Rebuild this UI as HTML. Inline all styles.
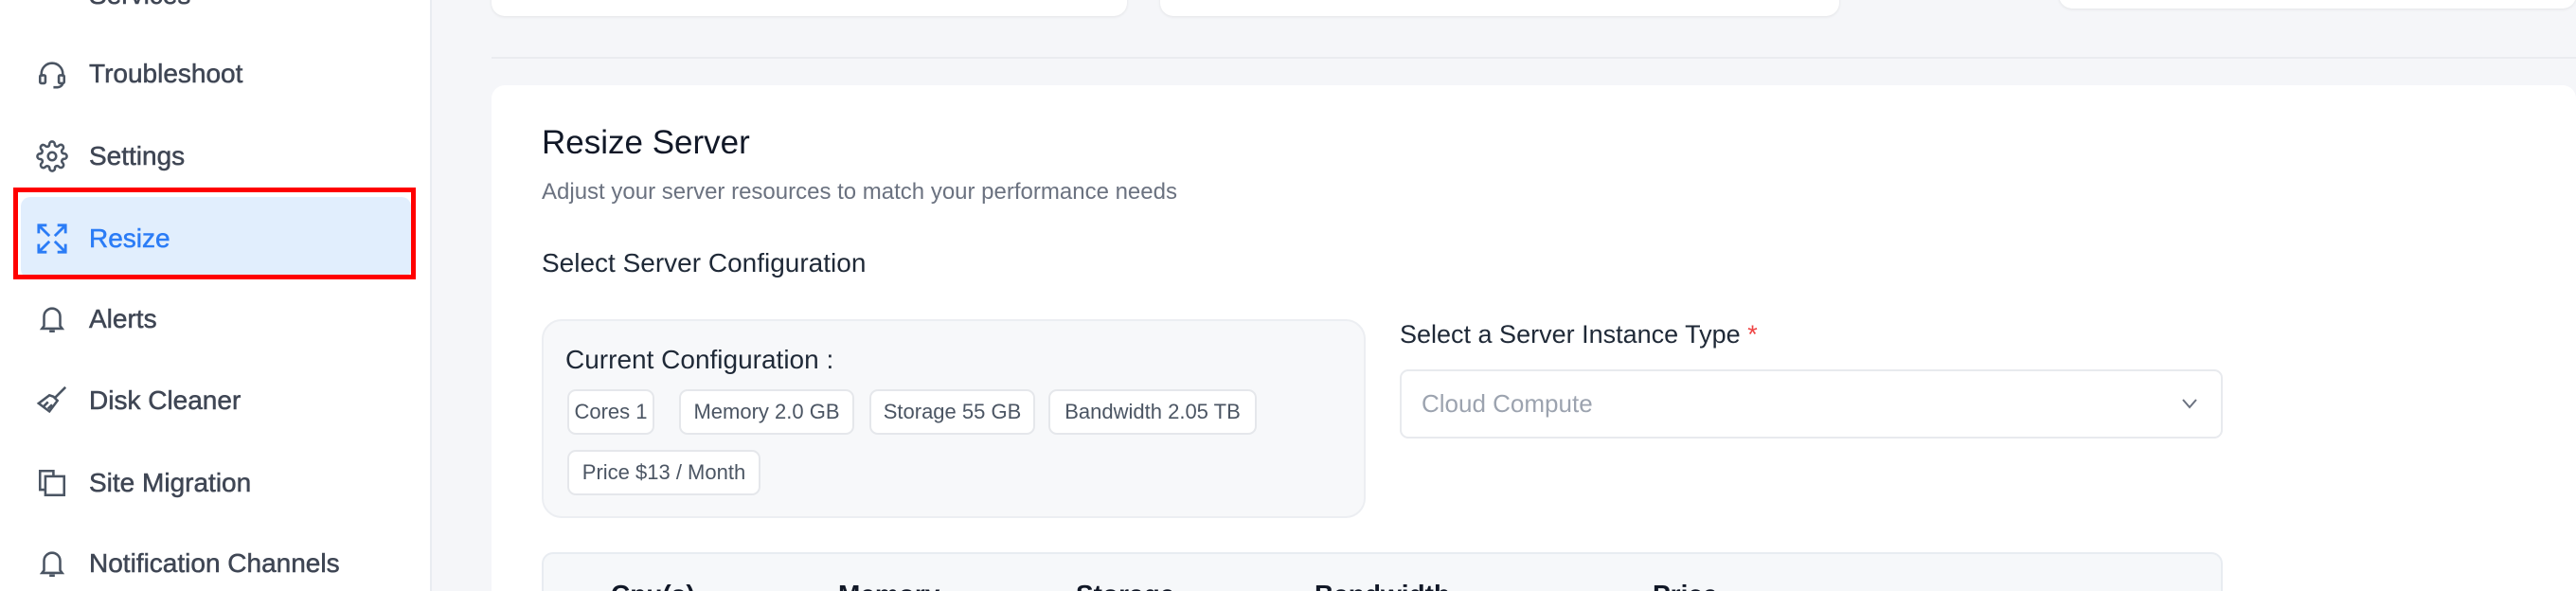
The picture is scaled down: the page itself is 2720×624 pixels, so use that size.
<!DOCTYPE html>
<html style="width:2720px;height:624px;overflow:hidden"><head><style>
*{box-sizing:border-box;margin:0;padding:0}
body{width:2720px;height:624px;overflow:hidden;background:#f5f6f9;font-family:"Liberation Sans",sans-serif;position:relative}
.sb{position:absolute;left:0;top:0;width:456px;height:624px;background:#fff;border-right:2px solid #e9ecf1}
.it{position:absolute;left:94px;font-size:28px;color:#3f4654;line-height:32px;-webkit-text-stroke:0.5px #3f4654}
.ic{position:absolute;left:38px;width:34px;height:34px}
.ab{position:absolute}
.card{position:absolute;background:#fff;border-radius:14px;box-shadow:0 1px 3px rgba(0,0,0,.08)}
.chip{position:absolute;height:48px;border:2px solid #e5e7eb;border-radius:9px;background:#fff;font-size:22px;color:#4b5563;line-height:44px;text-align:center}
.th{position:absolute;top:612px;font-size:28px;font-weight:700;color:#111827}
</style></head><body>
<div class="sb">
 <div class="it" style="top:-21px">Services</div>
 <svg class="ic" style="top:61px" viewBox="0 0 24 24" fill="none" stroke="#4b5563" stroke-width="1.8"><path d="M4 14v-2a8 8 0 0 1 16 0v2"/><rect x="3" y="13" width="4" height="6" rx="1"/><rect x="17" y="13" width="4" height="6" rx="1"/><path d="M20 19a4 4 0 0 1-4 3h-3"/></svg>
 <div class="it" style="top:62px">Troubleshoot</div>
 <svg class="ic" style="top:148px" viewBox="0 0 24 24" fill="none" stroke="#4b5563" stroke-width="1.8"><circle cx="12" cy="12" r="3"/><path d="M19.4 15a1.7 1.7 0 0 0 .3 1.8l.1.1a2 2 0 1 1-2.8 2.8l-.1-.1a1.7 1.7 0 0 0-1.8-.3 1.7 1.7 0 0 0-1 1.5V21a2 2 0 1 1-4 0v-.1a1.7 1.7 0 0 0-1.1-1.5 1.7 1.7 0 0 0-1.8.3l-.1.1a2 2 0 1 1-2.8-2.8l.1-.1a1.7 1.7 0 0 0 .3-1.8 1.7 1.7 0 0 0-1.5-1H3a2 2 0 1 1 0-4h.1a1.7 1.7 0 0 0 1.5-1.1 1.7 1.7 0 0 0-.3-1.8l-.1-.1a2 2 0 1 1 2.8-2.8l.1.1a1.7 1.7 0 0 0 1.8.3H9a1.7 1.7 0 0 0 1-1.5V3a2 2 0 1 1 4 0v.1a1.7 1.7 0 0 0 1 1.5 1.7 1.7 0 0 0 1.8-.3l.1-.1a2 2 0 1 1 2.8 2.8l-.1.1a1.7 1.7 0 0 0-.3 1.8V9a1.7 1.7 0 0 0 1.5 1H21a2 2 0 1 1 0 4h-.1a1.7 1.7 0 0 0-1.5 1z"/></svg>
 <div class="it" style="top:149px">Settings</div>
 <div class="ab" style="left:22px;top:208px;width:412px;height:86px;background:#e1eefd;border-radius:10px"></div>
 <div class="ab" style="left:14px;top:198px;width:425px;height:97px;border:5px solid #ff0000"></div>
 <svg class="ic" style="top:235px" viewBox="0 0 24 24" fill="none" stroke="#2b7cf6" stroke-width="2"><path d="M2 8V2h6M2 2l8 8M22 16v6h-6M22 22l-8-8M16 2h6v6M22 2l-8 8M8 22H2v-6M2 22l8-8"/></svg>
 <div class="it" style="top:236px;color:#2b7cf6;-webkit-text-stroke:0.5px #2b7cf6">Resize</div>
 <svg class="ic" style="top:320px" viewBox="0 0 24 24" fill="none" stroke="#4b5563" stroke-width="1.8"><path d="M6 17V10a6 6 0 0 1 12 0v7l1.5 2h-15z"/><path d="M10 21h4"/></svg>
 <div class="it" style="top:321px">Alerts</div>
 <svg class="ic" style="top:406px" viewBox="0 0 24 24" fill="none" stroke="#4b5563" stroke-width="1.8"><path d="M22 2l-8 8M13 9l3 3-6 8-8-6 8-6z M6 16l3-3M9 18l3-3"/></svg>
 <div class="it" style="top:407px">Disk Cleaner</div>
 <svg class="ic" style="top:493px" viewBox="0 0 24 24" fill="none" stroke="#4b5563" stroke-width="1.8"><path d="M7 17H3V3h10v4"/><rect x="7" y="7" width="14" height="14"/></svg>
 <div class="it" style="top:494px">Site Migration</div>
 <svg class="ic" style="top:578px" viewBox="0 0 24 24" fill="none" stroke="#4b5563" stroke-width="1.8"><path d="M6 17V10a6 6 0 0 1 12 0v7l1.5 2h-15z"/><path d="M10 21h4"/></svg>
 <div class="it" style="top:579px">Notification Channels</div>
</div>

<div class="card" style="left:519px;top:-20px;width:671px;height:37px"></div>
<div class="card" style="left:1225px;top:-20px;width:717px;height:37px"></div>
<div class="card" style="left:2174px;top:-20px;width:546px;height:29px"></div>
<div class="ab" style="left:519px;top:60px;width:2201px;height:2px;background:#eaecf0"></div>

<div class="ab" style="left:519px;top:90px;width:2201px;height:534px;background:#fff;border-radius:14px 14px 0 0"></div>
<div class="ab" style="left:572px;top:131px;font-size:35px;color:#111827">Resize Server</div>
<div class="ab" style="left:572px;top:189px;font-size:24px;color:#6b7280">Adjust your server resources to match your performance needs</div>
<div class="ab" style="left:572px;top:262px;font-size:28px;color:#1f2937">Select Server Configuration</div>

<div class="ab" style="left:572px;top:337px;width:870px;height:210px;background:#f7f8fa;border:2px solid #eceef2;border-radius:21px"></div>
<div class="ab" style="left:597px;top:364px;font-size:28px;color:#1f2937">Current Configuration :</div>
<div class="chip" style="left:599px;top:411px;width:92px">Cores 1</div>
<div class="chip" style="left:717px;top:411px;width:185px">Memory 2.0 GB</div>
<div class="chip" style="left:918px;top:411px;width:175px">Storage 55 GB</div>
<div class="chip" style="left:1107px;top:411px;width:220px">Bandwidth 2.05 TB</div>
<div class="chip" style="left:599px;top:475px;width:204px">Price $13 / Month</div>

<div class="ab" style="left:1478px;top:338px;font-size:27px;color:#1f2937">Select a Server Instance Type <span style="color:#ef4444">*</span></div>
<div class="ab" style="left:1478px;top:390px;width:869px;height:73px;border:2px solid #e8eaee;border-radius:9px;background:#fff"></div>
<div class="ab" style="left:1501px;top:411px;font-size:26px;color:#9ca3af">Cloud Compute</div>
<svg class="ab" style="left:2302px;top:418px" width="20" height="16" viewBox="0 0 20 16" fill="none" stroke="#6b7280" stroke-width="2"><path d="M3 4l7 8 7-8"/></svg>

<div class="ab" style="left:572px;top:583px;width:1775px;height:41px;background:#f6f8fa;border:2px solid #e8ecf1;border-bottom:none;border-radius:12px 12px 0 0"></div>
<div class="th" style="left:645px">Cpu(s)</div>
<div class="th" style="left:885px">Memory</div>
<div class="th" style="left:1136px">Storage</div>
<div class="th" style="left:1388px">Bandwidth</div>
<div class="th" style="left:1745px">Price</div>
</body></html>
